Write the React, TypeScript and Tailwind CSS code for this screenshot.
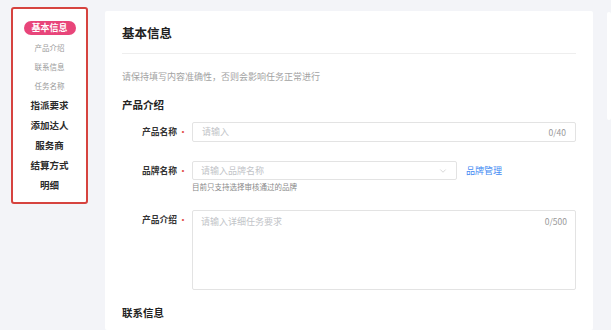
import { ChevronDown } from 'lucide-react';

const font = { fontFamily: '"Noto Sans CJK SC", "Noto Sans", sans-serif' };

function SideNav() {
  const subs = ['产品介绍', '联系信息', '任务名称'];
  const mains = ['指派要求', '添加达人', '服务商', '结算方式', '明细'];
  return (
    <div className="w-[105px] shrink-0 pl-[11px] pt-[7px]">
      <div className="w-[77px] h-[197px] border-2 border-[#d6433f] rounded-[3px] bg-white flex flex-col items-center pt-[12px]">
        <div className="w-[52px] h-[14px] rounded-full bg-[#e8457a] text-white text-[9px] font-bold leading-[14px] text-center">
          基本信息
        </div>
        <div className="mt-[3px] flex flex-col items-center">
          {subs.map((s) => (
            <div key={s} className="h-[19px] leading-[19px] text-[7.5px] text-[#9a9a9a]">
              {s}
            </div>
          ))}
        </div>
        <div className="flex flex-col items-center">
          {mains.map((m) => (
            <div key={m} className="h-[20px] leading-[20px] text-[9.5px] font-semibold text-[#2b2b2b]">
              {m}
            </div>
          ))}
        </div>
      </div>
    </div>
  );
}

function Label({ text }: { text: string }) {
  return (
    <div className="w-[70px] shrink-0 flex justify-end items-center pr-[4px] h-[20px]">
      <span className="text-[8.75px] font-semibold text-[#333]">{text}</span>
      <span className="text-[10px] text-[#e34d4d] ml-[1px] leading-none">•</span>
    </div>
  );
}

export default function App() {
  return (
    <div className="w-[611px] h-[330px] overflow-hidden bg-[#f3f4f8] flex" style={font}>
      <SideNav />
      <div className="w-[488px] shrink-0 mt-[11px] bg-white rounded-[2px] px-[17px] pt-[14px]">
        <div className="h-[16px] leading-[16px] text-[12.5px] font-semibold text-[#222]">基本信息</div>
        <div className="mt-[12px] border-t border-[#eeeeee]" />
        <div className="mt-[17px] h-[12px] leading-[12px] text-[9px] text-[#a3a3a3]">
          请保持填写内容准确性，否则会影响任务正常进行
        </div>
        <div className="mt-[15px] h-[14px] leading-[14px] text-[10.5px] font-bold text-[#222]">产品介绍</div>

        <div className="mt-[10px] flex items-start">
          <Label text="产品名称" />
          <div className="flex-1 h-[20px] border border-[#e3e3e3] rounded-[2px] flex items-center justify-between px-[9px]">
            <span className="text-[9px] text-[#c2c4c8]">请输入</span>
            <span className="text-[8.5px] text-[#999]">0/40</span>
          </div>
        </div>

        <div className="mt-[19px] flex items-start">
          <Label text="品牌名称" />
          <div>
            <div className="flex items-center">
              <div className="w-[265px] h-[19px] border border-[#e3e3e3] rounded-[2px] flex items-center justify-between px-[8px]">
                <span className="text-[9px] text-[#c2c4c8]">请输入品牌名称</span>
                <ChevronDown size={10} strokeWidth={1.5} className="text-[#c0c0c0]" />
              </div>
              <span className="ml-[9px] text-[9px] text-[#3f8af3]">品牌管理</span>
            </div>
            <div className="mt-[2px] h-[10px] leading-[10px] text-[7.5px] text-[#8a8a8a]">目前只支持选择审核通过的品牌</div>
          </div>
        </div>

        <div className="mt-[18px] flex items-start">
          <Label text="产品介绍" />
          <div className="flex-1 h-[80px] border border-[#e3e3e3] rounded-[2px] flex justify-between px-[8px] pt-[4px]">
            <span className="text-[9px] text-[#c2c4c8]">请输入详细任务要求</span>
            <span className="text-[8.5px] text-[#999]">0/500</span>
          </div>
        </div>

        <div className="mt-[16px] h-[14px] leading-[14px] text-[10.5px] font-bold text-[#222]">联系信息</div>
        <div className="mt-[10px] flex">
          <div className="w-[70px] shrink-0" />
          <div className="flex-1 h-[20px] border border-[#e3e3e3] rounded-[2px]" />
        </div>
      </div>
      <div className="ml-[14px] mt-[12px] w-[20px] h-[108px] bg-white rounded-[2px]" />
    </div>
  );
}
